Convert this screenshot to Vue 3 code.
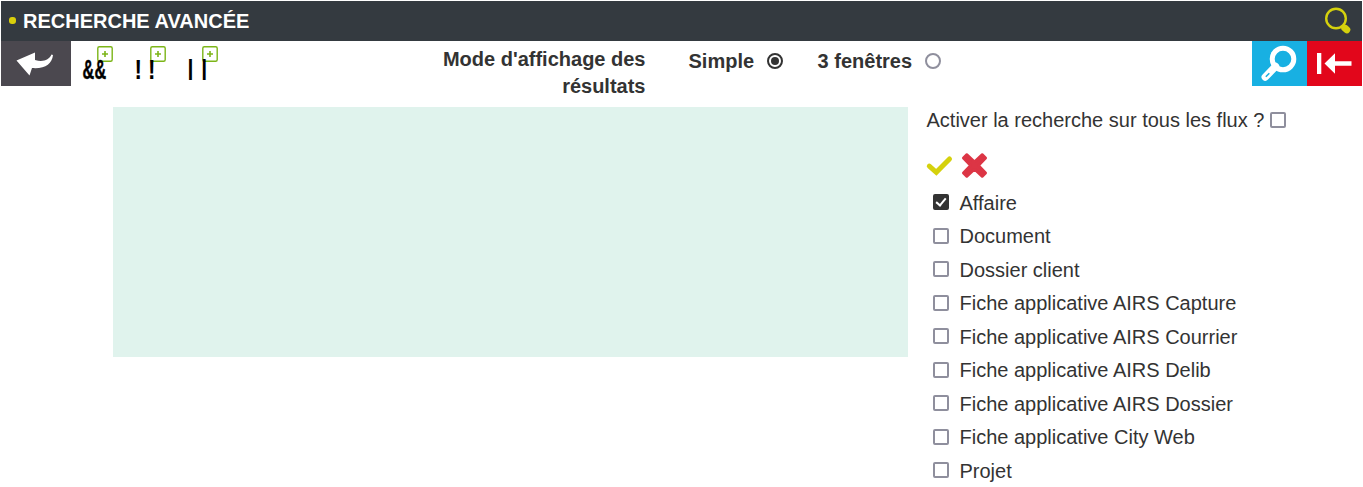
<script setup>
import { ref } from 'vue'

const flows = ref([
  { label: 'Affaire', checked: true },
  { label: 'Document', checked: false },
  { label: 'Dossier client', checked: false },
  { label: 'Fiche applicative AIRS Capture', checked: false },
  { label: 'Fiche applicative AIRS Courrier', checked: false },
  { label: 'Fiche applicative AIRS Delib', checked: false },
  { label: 'Fiche applicative AIRS Dossier', checked: false },
  { label: 'Fiche applicative City Web', checked: false },
  { label: 'Projet', checked: false }
])
const allFlows = ref(false)
const display = ref('simple')
const operators = [
  { chars: '&', x: [0.6, 12.6], y: 37.5, sx: 0.6, size: 27, weight: 700, stroke: 0.5 },
  { chars: '!', x: [-0.4, 13.1], y: 38, sx: 0.8, size: 28, weight: 700, stroke: 0 },
  { chars: '|', x: [-1, 12.8], y: 34.3, sx: 1.6, size: 21.5, weight: 400, stroke: 0 }
]
</script>

<template>
  <div class="page">
    <header class="titlebar">
      <span class="dot"></span>
      <h1>RECHERCHE AVANCÉE</h1>
      <svg class="lens" width="28" height="28" viewBox="0 0 28 28">
        <circle cx="12" cy="11.5" r="9.8" fill="none" stroke="#d5d10d" stroke-width="2.4" />
        <path d="M18.5 18.5 L21 21" stroke="#d5d10d" stroke-width="3" />
        <path d="M20.8 21.1 L22.8 22.7" stroke="#d5d10d" stroke-width="7" stroke-linecap="round" />
      </svg>
    </header>

    <div class="toolbar">
      <button class="back" aria-label="Retour">
        <svg width="70" height="45" viewBox="0 0 70 45">
          <path d="M15.5 19.5 L34 11.5 V19 C42 21.5 48 19 50.5 13.5 L52 14 C51 23 44 28 31 27 L28.5 34.5 Z" fill="#fff" />
        </svg>
      </button>
      <div class="operators">
        <button v-for="op in operators" :key="op.chars" class="operator">
          <svg width="34" height="45" viewBox="0 0 34 45">
            <rect x="15.8" y="5.8" width="14.4" height="14.4" rx="1.5" fill="#fff" stroke="#7cb518" stroke-width="1.4" />
            <path d="M20 13 H26 M23 10 V16" stroke="#7cb518" stroke-width="1.6" />
            <text
              v-for="x in op.x"
              :key="x"
              :transform="`translate(${x} ${op.y}) scale(${op.sx} 1)`"
              :font-size="op.size"
              :font-weight="op.weight"
              :stroke-width="op.stroke"
              stroke="#000"
              class="glyph"
            >{{ op.chars }}</text>
          </svg>
        </button>
      </div>
      <div class="mode">Mode d'affichage des résultats</div>
      <label class="choice simple">
        Simple
        <input v-model="display" type="radio" value="simple" />
      </label>
      <label class="choice triple">
        3 fenêtres
        <input v-model="display" type="radio" value="triple" />
      </label>
      <div class="actions">
        <button class="search" aria-label="Rechercher">
          <svg width="55" height="45" viewBox="0 0 55 45">
            <circle cx="31" cy="18" r="10.8" fill="none" stroke="#fff" stroke-width="5" />
            <path d="M23.5 25.5 L13.3 36" stroke="#fff" stroke-width="7.5" stroke-linecap="round" />
            <path d="M17.3 32.2 L13.8 35.7" stroke="#18b0e2" stroke-width="1.6" />
          </svg>
        </button>
        <button class="exit" aria-label="Quitter">
          <svg width="55" height="45" viewBox="0 0 55 45" fill="#fff">
            <path d="M10 12 H14.3 V33 H10 Z M17.5 22.5 L28 12.2 V20.2 H44.5 V24.8 H28 V32.8 Z" />
          </svg>
        </button>
      </div>
    </div>

    <main class="content">
      <section class="criteria"></section>
      <aside class="flows">
        <label class="all">
          <span>Activer la recherche sur tous les flux ?</span>
          <input v-model="allFlows" type="checkbox" />
        </label>
        <div class="toggles">
          <svg width="26" height="26" viewBox="0 0 26 26">
            <path d="M2.3 13.2 L9.3 19.3 L22.5 6" fill="none" stroke="#d5d10d" stroke-width="5" stroke-linecap="round" />
          </svg>
          <svg class="cross" width="26" height="26" viewBox="0 0 26 26">
            <path d="M4.8 1.5 L12.5 8.7 L20.2 1.5 L23.7 5 L16.5 12.5 L23.7 20 L20.2 23.5 L12.5 16.3 L4.8 23.5 L1.3 20 L8.5 12.5 L1.3 5 Z" fill="#dc3545" stroke="#dc3545" stroke-width="2.6" stroke-linejoin="round" />
          </svg>
        </div>
        <ul>
          <li v-for="flow in flows" :key="flow.label">
            <label>
              <input v-model="flow.checked" type="checkbox" />
              <span>{{ flow.label }}</span>
            </label>
          </li>
        </ul>
      </aside>
    </main>
  </div>
</template>

<style>
body {
  background: #fff;
  overflow: hidden;
}
</style>

<style scoped>
.page {
  box-sizing: border-box;
  width: 1363px;
  height: 487px;
  padding: 1px 1px 0;
  overflow: hidden;
  font: 20px/27px "Liberation Sans", Arial, sans-serif;
  color: #333;
}
.titlebar {
  display: flex;
  height: 40px;
  background: #343a40;
  color: #fff;
}
.dot {
  width: 7px;
  height: 7px;
  margin: 16px 7px 0 8px;
  border-radius: 3px;
  background: #d9cf0b;
}
h1 {
  margin: 7px 0 0;
  font-size: 20px;
  line-height: 27px;
}
.lens {
  margin: 6px 10px 0 auto;
}
.toolbar {
  display: flex;
  height: 66px;
}
button {
  display: block;
  padding: 0;
  border: 0;
  background: none;
}
svg {
  display: block;
  overflow: visible;
}
.back {
  width: 70px;
  height: 45px;
  background: #4b484f;
}
.operators {
  display: flex;
  gap: 18.5px;
  width: 150px;
  margin-left: 11px;
}
.operator {
  height: 45px;
}
.glyph {
  font-family: "Liberation Sans", Arial, sans-serif;
  fill: #000;
}
.mode {
  width: 214px;
  margin: 5px 0 0 199.5px;
  font-weight: 700;
  text-align: right;
}
.choice {
  display: flex;
  align-items: center;
  height: 27px;
  margin-top: 7px;
  font-weight: 700;
}
.simple {
  margin-left: 43px;
}
.triple {
  margin-left: 34.5px;
}
input {
  box-sizing: border-box;
  display: grid;
  place-items: center;
  flex: none;
  appearance: none;
  width: 16px;
  height: 16px;
  margin: 0 0 1px;
  border: 2px solid #8f8f9d;
  border-radius: 2px;
  background: #fff;
}
input[type="radio"] {
  margin-left: 13px;
  border-radius: 50%;
}
input[type="radio"]:checked {
  border-color: #333;
}
input[type="radio"]:checked::before {
  content: "";
  width: 8px;
  height: 8px;
  border-radius: 50%;
  background: #333;
}
input[type="checkbox"]:checked {
  border-color: #333;
  background: #333;
}
input[type="checkbox"]:checked::before {
  content: "";
  box-sizing: border-box;
  width: 6px;
  height: 10px;
  border: solid #fff;
  border-width: 0 2px 2px 0;
  transform: translateY(-1px) rotate(40deg);
}
.actions {
  display: flex;
  margin-left: auto;
}
.search,
.exit {
  width: 55px;
  height: 45px;
}
.search {
  background: #18b0e2;
}
.exit {
  background: #e2061b;
}
.content {
  display: flex;
  padding-left: 112px;
}
.criteria {
  width: 795px;
  height: 250px;
  background: #e0f3ed;
}
.flows {
  margin-left: 18.5px;
}
.all {
  display: flex;
  align-items: center;
  gap: 5.5px;
  height: 27px;
}
.toggles {
  display: flex;
  gap: 9px;
  margin-top: 18.5px;
}
ul {
  margin: 7.7px 0 0;
  padding: 0;
  list-style: none;
}
li {
  height: 33.5px;
  padding-top: 3.5px;
  box-sizing: border-box;
}
li label {
  display: flex;
  align-items: center;
  gap: 10.5px;
  height: 27px;
  margin-left: 6.5px;
}
li input {
  margin-bottom: 1.8px;
}
</style>
